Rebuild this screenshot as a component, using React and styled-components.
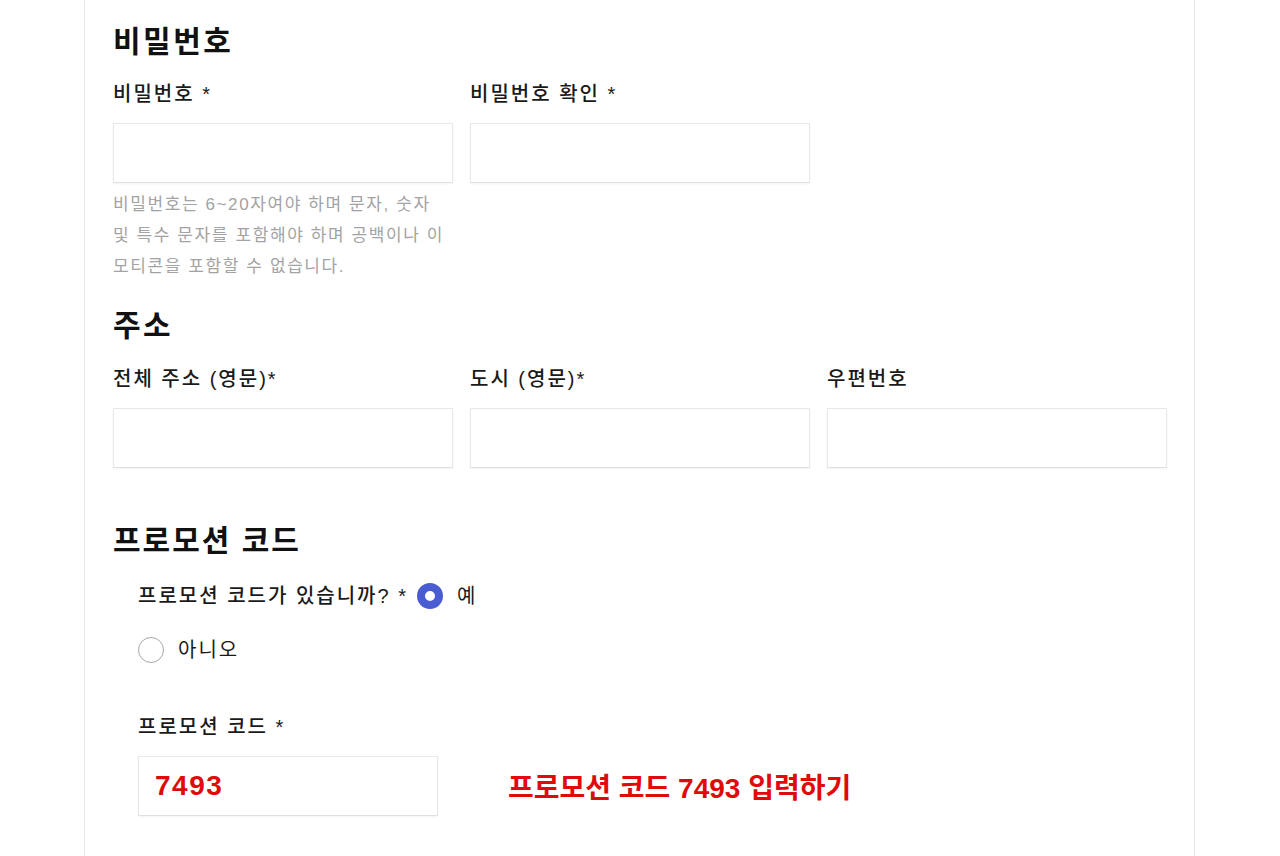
import { useState } from "react";
import styled, { createGlobalStyle } from "styled-components";

const GlobalStyle = createGlobalStyle`
  html, body {
    margin: 0;
    padding: 0;
    background: #ffffff;
  }
  body {
    font-family: "Liberation Sans", "Noto Sans CJK KR", sans-serif;
    color: #111111;
  }
`;

const Page = styled.div`
  width: 1280px;
  height: 856px;
  overflow: hidden;
  background: #ffffff;
`;

const Card = styled.div`
  margin-left: 84px;
  width: 1111px;
  min-height: 856px;
  box-sizing: border-box;
  border-left: 1px solid #e6e6e6;
  border-right: 1px solid #e6e6e6;
  padding: 24px 28px 0 28px;
`;

const Section = styled.section`
  margin-top: ${(p) => p.$top || 0}px;
`;

const Heading = styled.h2`
  margin: 0;
  font-size: 30px;
  line-height: 36px;
  font-weight: ${(p) => (p.$bold ? 700 : 600)};
  color: #111111;
  letter-spacing: ${(p) => (p.$bold ? 2 : 2.5)}px;
`;

const Row = styled.div`
  display: grid;
  grid-template-columns: repeat(3, 340px);
  column-gap: 17px;
  margin-top: ${(p) => p.$top || 22}px;
`;

const Field = styled.div`
  display: flex;
  flex-direction: column;
`;

const Label = styled.label`
  font-size: 20px;
  line-height: 24px;
  font-weight: 500;
  color: #1a1a1a;
  letter-spacing: 2px;
  margin-bottom: 17px;
`;

const Input = styled.input`
  width: ${(p) => p.$width || 340}px;
  height: 60px;
  box-sizing: border-box;
  border: 1px solid #e8e8e8;
  border-bottom-color: #e0e0e0;
  box-shadow: 0 1px 2px rgba(0, 0, 0, 0.05);
  background: #ffffff;
  outline: none;
  padding: 0 16px;
  font-family: "Liberation Sans", "Noto Sans CJK KR", sans-serif;
  font-size: 28px;
  font-weight: 700;
  letter-spacing: 1.5px;
  color: #e00a0a;
`;

const Help = styled.p`
  margin: 6px 0 0 0;
  width: 340px;
  font-size: 17px;
  line-height: 31px;
  color: #a3a3a3;
  letter-spacing: 1.6px;
`;

const Promo = styled.div`
  padding-left: 25px;
  margin-top: 24px;
`;

const RadioGroup = styled.div`
  display: flex;
  flex-wrap: wrap;
  align-items: center;
  width: 420px;
  column-gap: 9px;
  row-gap: 28px;
`;

const Question = styled.span`
  font-size: 20px;
  line-height: 26px;
  font-weight: 500;
  letter-spacing: 2px;
  color: #1a1a1a;
`;

const Option = styled.label`
  display: flex;
  align-items: center;
  gap: 14px;
  font-size: 20px;
  line-height: 26px;
  letter-spacing: 2px;
  color: #1a1a1a;
  cursor: pointer;
`;

const Dot = styled.span`
  width: 26px;
  height: 26px;
  box-sizing: border-box;
  border-radius: 50%;
  border: ${(p) => (p.$on ? "8px solid #4b5bd2" : "1px solid #a8a8a8")};
  background: #ffffff;
  flex-shrink: 0;
`;

const CodeBlock = styled.div`
  margin-top: 52px;
  display: flex;
  flex-direction: column;
`;

const CodeRow = styled.div`
  display: flex;
  align-items: center;
  gap: 70px;
`;

const Note = styled.span`
  font-size: 28px;
  font-weight: 700;
  color: #e00a0a;
  letter-spacing: 0;
`;

export default function App() {
  const [hasCode, setHasCode] = useState(true);

  return (
    <Page>
      <GlobalStyle />
      <Card>
        <Section>
          <Heading>비밀번호</Heading>
          <Row>
            <Field>
              <Label>비밀번호 *</Label>
              <Input type="password" />
              <Help>
                비밀번호는 6~20자여야 하며 문자, 숫자 및 특수 문자를 포함해야
                하며 공백이나 이모티콘을 포함할 수 없습니다.
              </Help>
            </Field>
            <Field>
              <Label>비밀번호 확인 *</Label>
              <Input type="password" />
            </Field>
          </Row>
        </Section>

        <Section $top={26}>
          <Heading>주소</Heading>
          <Row $top={23}>
            <Field>
              <Label>전체 주소 (영문)*</Label>
              <Input />
            </Field>
            <Field>
              <Label>도시 (영문)*</Label>
              <Input />
            </Field>
            <Field>
              <Label>우편번호</Label>
              <Input />
            </Field>
          </Row>
        </Section>

        <Section $top={55}>
          <Heading $bold>프로모션 코드</Heading>
          <Promo>
            <RadioGroup>
              <Question>프로모션 코드가 있습니까? *</Question>
              <Option onClick={() => setHasCode(true)}>
                <Dot $on={hasCode} />
                예
              </Option>
              <Option onClick={() => setHasCode(false)}>
                <Dot $on={!hasCode} />
                아니오
              </Option>
            </RadioGroup>
            <CodeBlock>
              <Label>프로모션 코드 *</Label>
              <CodeRow>
                <Input $width={300} defaultValue="7493" />
                <Note>프로모션 코드 7493 입력하기</Note>
              </CodeRow>
            </CodeBlock>
          </Promo>
        </Section>
      </Card>
    </Page>
  );
}
